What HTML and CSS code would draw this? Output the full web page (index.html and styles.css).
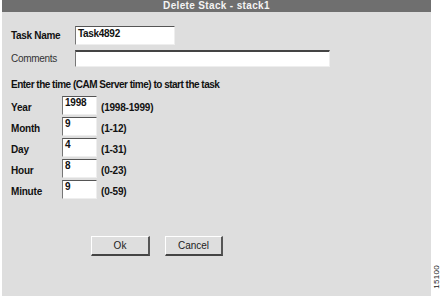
FILE: index.html
```html
<!DOCTYPE html>
<html lang="en">
<head>
    <meta charset="UTF-8">
    <title>Delete Stack - stack1</title>
    <link rel="stylesheet" href="styles.css">
</head>
<body>
    <div class="page">
        <div class="panel">
            <div class="title-bar">Delete Stack - stack1</div>

            <div class="form">
                <div class="field-row task-row">
                    <label class="label bold">Task Name</label>
                    <div class="input task-input">Task4892</div>
                </div>
                <div class="field-row comments-row">
                    <label class="label">Comments</label>
                    <div class="input comments-input"></div>
                </div>

                <p class="section">Enter the time (CAM Server time) to start the task</p>

                <div class="time-rows">
                    <div class="time-row">
                        <span class="time-label">Year</span>
                        <div class="input time-input">1998</div>
                        <span class="hint">(1998-1999)</span>
                    </div>
                    <div class="time-row">
                        <span class="time-label">Month</span>
                        <div class="input time-input">9</div>
                        <span class="hint">(1-12)</span>
                    </div>
                    <div class="time-row">
                        <span class="time-label">Day</span>
                        <div class="input time-input">4</div>
                        <span class="hint">(1-31)</span>
                    </div>
                    <div class="time-row">
                        <span class="time-label">Hour</span>
                        <div class="input time-input">8</div>
                        <span class="hint">(0-23)</span>
                    </div>
                    <div class="time-row">
                        <span class="time-label">Minute</span>
                        <div class="input time-input">9</div>
                        <span class="hint">(0-59)</span>
                    </div>
                </div>

                <div class="buttons">
                    <button class="btn">Ok</button>
                    <button class="btn">Cancel</button>
                </div>
            </div>
        </div>
        <div class="fig-number">15100</div>
    </div>
</body>
</html>
```

FILE: styles.css
```css
body {
    margin: 0;
    background-color: #fff;
    font-family: "Liberation Sans", Arial, sans-serif;
    font-size: 10px;
    color: #111;
}

.page {
    display: flex;
    width: 442px;
    height: 297px;
}

.panel {
    margin-left: 2px;
    width: 429px;
    height: 296px;
    background-color: #dedede;
    display: flex;
    flex-direction: column;
}

.title-bar {
    height: 12px;
    line-height: 12px;
    background-color: #6f6f6f;
    color: #f4f4f4;
    font-weight: bold;
    font-size: 10px;
    text-align: center;
    letter-spacing: 0.35px;
}

.form {
    padding-left: 9px;
    display: flex;
    flex-direction: column;
}

.field-row {
    display: flex;
    align-items: center;
    letter-spacing: -0.3px;
}

.task-row {
    margin-top: 14px;
    height: 19px;
}

.comments-row {
    margin-top: 5px;
    height: 17px;
}

.label {
    width: 64px;
    color: #333;
}

.bold {
    font-weight: bold;
    color: #111;
}

.input {
    box-sizing: border-box;
    background-color: #fff;
    border-top: 1px solid #555;
    border-left: 1px solid #777;
    border-right: 1px solid #eee;
    border-bottom: 1px solid #eee;
    font-weight: bold;
    padding-left: 2px;
}

.task-input {
    width: 100px;
    height: 19px;
    line-height: 14px;
}

.comments-input {
    width: 255px;
    height: 17px;
    border-top: 2px solid #444;
}

.section {
    margin: 12px 0 0;
    height: 12px;
    line-height: 12px;
    font-weight: bold;
    letter-spacing: -0.5px;
}

.time-rows {
    margin-top: 5px;
    display: flex;
    flex-direction: column;
    gap: 2px;
}

.time-row {
    display: flex;
    align-items: center;
    height: 19px;
    font-weight: bold;
    letter-spacing: -0.2px;
}

.time-label {
    width: 51px;
    padding-top: 3px;
}

.time-input {
    width: 35px;
    height: 19px;
    line-height: 12px;
}

.hint {
    margin-left: 4px;
    padding-top: 3px;
}

.buttons {
    margin-top: 37px;
    margin-left: 80px;
    display: flex;
    gap: 15px;
}

.btn {
    box-sizing: border-box;
    width: 59px;
    height: 20px;
    background-color: #dedede;
    border-top: 1px solid #fff;
    border-left: 1px solid #fff;
    border-right: 2px solid #555;
    border-bottom: 2px solid #444;
    font-family: "Liberation Sans", Arial, sans-serif;
    font-size: 10px;
    color: #222;
    padding: 0;
}

.btn + .btn {
    width: 58px;
}

.fig-number {
    align-self: flex-end;
    margin-bottom: 8px;
    margin-left: 1px;
    writing-mode: vertical-rl;
    transform: rotate(180deg);
    font-size: 8px;
    color: #222;
    letter-spacing: 0.3px;
}
```
